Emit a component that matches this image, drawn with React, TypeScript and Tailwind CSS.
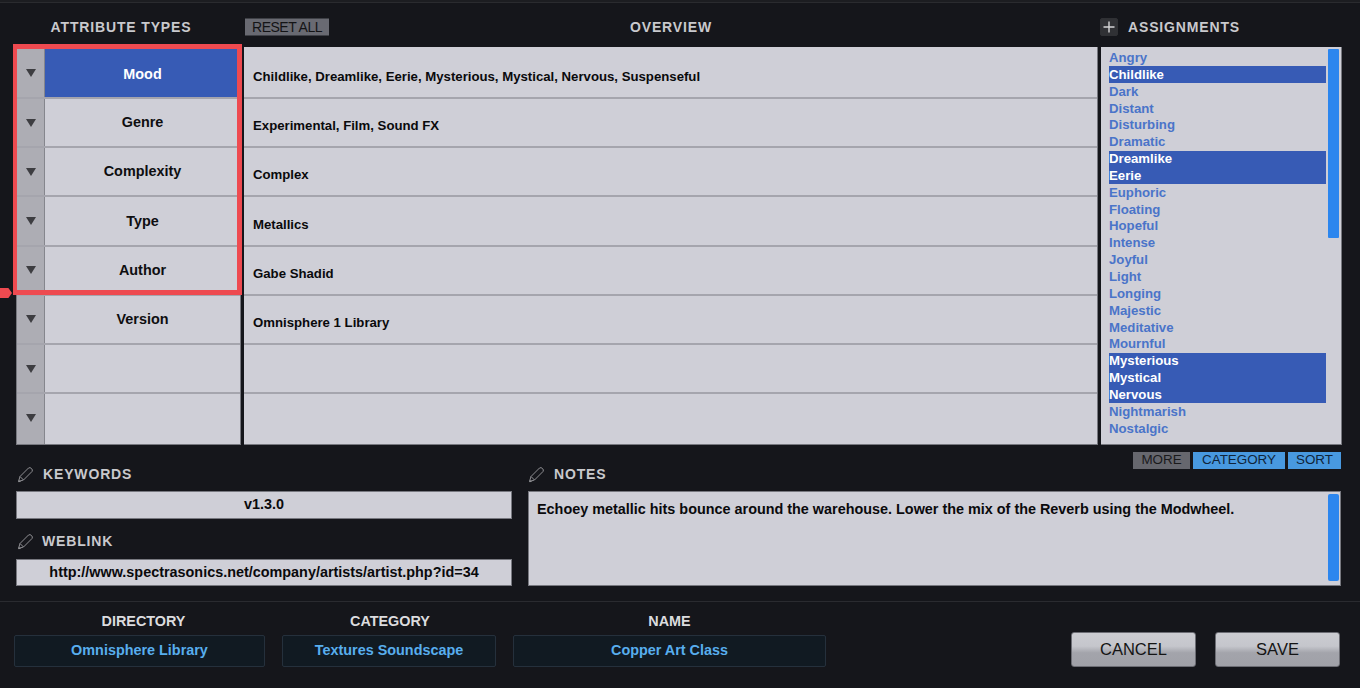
const rows = [
  { name: 'Mood', value: 'Childlike, Dreamlike, Eerie, Mysterious, Mystical, Nervous, Suspenseful', active: true },
  { name: 'Genre', value: 'Experimental, Film, Sound FX' },
  { name: 'Complexity', value: 'Complex' },
  { name: 'Type', value: 'Metallics' },
  { name: 'Author', value: 'Gabe Shadid' },
  { name: 'Version', value: 'Omnisphere 1 Library' },
  { name: '', value: '' },
  { name: '', value: '' },
];

const assignments = [
  ['Angry', false],
  ['Childlike', true],
  ['Dark', false],
  ['Distant', false],
  ['Disturbing', false],
  ['Dramatic', false],
  ['Dreamlike', true],
  ['Eerie', true],
  ['Euphoric', false],
  ['Floating', false],
  ['Hopeful', false],
  ['Intense', false],
  ['Joyful', false],
  ['Light', false],
  ['Longing', false],
  ['Majestic', false],
  ['Meditative', false],
  ['Mournful', false],
  ['Mysterious', true],
  ['Mystical', true],
  ['Nervous', true],
  ['Nightmarish', false],
  ['Nostalgic', false],
] as const;

const Pencil = () => (
  <svg width="17" height="17" viewBox="0 0 17 17" fill="none" stroke="#8f8f93" strokeWidth="1" className="shrink-0">
    <path d="M1.5 15.5 L3 10.5 L11.5 2 Q13 1 14.5 2.5 Q16 4 15 5.5 L6.5 14 Z" />
    <path d="M3 10.5 L6.5 14" />
    <path d="M1.5 15.5 L3.5 15" strokeWidth="1.6" />
  </svg>
);

const Label = ({ children }: { children: string }) => (
  <span className="text-[14px] font-bold tracking-[0.85px] leading-none text-[#c9c9cd]">{children}</span>
);

const Field = ({ label, value, className, labelClass = '' }: { label: string; value: string; className: string; labelClass?: string }) => (
  <div className={`flex flex-col items-center ${className}`}>
    <span className={`h-[21px] text-[14.4px] font-bold leading-[14px] text-[#dcdcdf] ${labelClass}`}>{label}</span>
    <div className="flex h-[32px] w-full items-center justify-center rounded-[2px] border border-[#25303c] bg-[#111a22] pb-[1px] text-[14.4px] font-bold text-[#58aeee]">
      {value}
    </div>
  </div>
);

const BigButton = ({ children }: { children: string }) => (
  <button className="flex h-[35px] w-[125px] items-center justify-center rounded-[3px] border border-[#6c6d74] bg-[linear-gradient(#cbccd1_0%,#c5c6cc_40%,#a3a4ab_60%,#a0a1a8_100%)] pb-[1px] text-[16.5px] text-[#141414]">
    {children}
  </button>
);

// rows are about 49px, first and last stretch to the panel edges
const rowHeight = (i: number) => {
  if (i === 0) return 'h-[52px] shrink-0';
  if (i === 7) return 'flex-1 min-h-0';
  return 'h-[49.2px] shrink-0';
};

export default function App() {
  return (
    <div className="relative flex h-[688px] w-[1360px] flex-col overflow-hidden bg-[#15161b] font-['Liberation_Sans',Arial,sans-serif]">
      <div className="h-[3px] bg-[#1c1d21] border-b border-[#2a2b2f]" />

      <div className="flex h-[44px] items-center pt-[3px] pl-[16px]">
        <div className="flex w-[228px] justify-center pr-[18px]">
          <Label>ATTRIBUTE TYPES</Label>
        </div>
        <div className="relative flex w-[856px] items-center justify-center pr-[2px]">
          <span className="absolute left-[1px] top-1/2 flex h-[17px] w-[84px] -translate-y-1/2 items-center justify-center bg-[#696a72] text-[14px] tracking-[-0.5px] text-[#141416]">
            RESET ALL
          </span>
          <Label>OVERVIEW</Label>
        </div>
        <div className="flex items-center gap-[10px]">
          <span className="flex h-[18px] w-[18px] items-center justify-center rounded-[2px] border border-[#2f3034] bg-[#303135] text-[#d4d4d6]">
            <svg width="12" height="12" viewBox="0 0 12 12" stroke="currentColor" strokeWidth="1.4">
              <path d="M6 0.5 V11.5 M0.5 6 H11.5" />
            </svg>
          </span>
          <Label>ASSIGNMENTS</Label>
        </div>
      </div>

      <div className="flex h-[398px] pl-[16px]">
        <div className="flex w-[225px] flex-col border-b border-r border-l border-[#77787f] bg-[#cfcfd7]">
          {rows.map((row, i) => (
            <div key={i} className={`flex border-b-2 border-[#a5a5ad] last:border-b-0 ${rowHeight(i)}`}>
              <div
                className={`flex w-[28px] shrink-0 items-center justify-center border-r border-[#85868d] bg-[#adadb4] ${
                  i === 0 ? 'pt-[2px]' : i === 7 ? 'pb-[3px]' : ''
                }`}
              >
                <span className="h-0 w-0 border-x-[5px] border-t-[8px] border-x-transparent border-t-[#3d3d41]" />
              </div>
              <div
                className={`flex flex-1 items-center justify-center text-[14.4px] font-bold ${
                  row.active ? 'bg-[#375bb5] pt-[5px] text-white' : 'pt-[1px] text-[#0e0e10]'
                }`}
              >
                {row.name}
              </div>
            </div>
          ))}
        </div>

        <div className="ml-[3px] flex w-[854px] flex-col border-b border-r border-[#77787f] bg-[#cfcfd7]">
          {rows.map((row, i) => (
            <div
              key={i}
              className={`flex items-center border-b-2 border-[#a5a5ad] pl-[9px] text-[13.2px] font-bold text-[#0a0a0c] last:border-b-0 ${rowHeight(i)} ${
                i === 0 ? 'pt-[9px]' : 'pt-[7px]'
              }`}
            >
              {row.value}
            </div>
          ))}
        </div>

        <div className="relative ml-[3px] w-[241px] border-b border-r border-[#77787f] bg-[#cfcfd7] pl-[8px] pt-[2.5px]">
          {assignments.map(([name, selected]) => (
            <div
              key={name}
              className={`flex h-[16.85px] w-[217px] items-center text-[13.2px] font-bold ${
                selected ? 'bg-[#375bb5] text-white' : 'text-[#4a74c9]'
              }`}
            >
              {name}
            </div>
          ))}
          <div className="absolute right-[2px] top-[2px] h-[189px] w-[11px] rounded-[1px] bg-[#2c86ee]" />
        </div>
      </div>

      <div className="flex h-[26px] items-center justify-end gap-[3px] pt-[4px] pr-[19px] text-[13.4px] leading-none">
        <span className="flex h-[17px] w-[57px] items-center justify-center bg-[#66676e] text-[#1a1a1c]">MORE</span>
        <span className="flex h-[17px] w-[92px] items-center justify-center bg-[#4899e0] text-[#10243a]">CATEGORY</span>
        <span className="flex h-[17px] w-[53px] items-center justify-center bg-[#4899e0] text-[#10243a]">SORT</span>
      </div>

      <div className="flex h-[131px] border-b border-[#2a2b30] pl-[16px]">
        <div className="flex w-[496px] flex-col">
          <div className="-mt-[7px] mb-[7px] flex h-[20px] items-center gap-[9px] pl-[1px]">
            <Pencil />
            <Label>KEYWORDS</Label>
          </div>
          <div className="flex h-[28px] items-center justify-center border border-[#77787f] bg-[#cfcfd7] text-[14.4px] font-bold text-[#0a0a0c]">
            v1.3.0
          </div>
          <div className="mt-[12px] flex h-[20px] items-center gap-[8px] pl-[1px]">
            <Pencil />
            <Label>WEBLINK</Label>
          </div>
          <div className="mt-[8px] flex h-[27px] items-center justify-center border border-[#77787f] bg-[#cfcfd7] text-[14.4px] font-bold text-[#0a0a0c]">
            http://www.spectrasonics.net/company/artists/artist.php?id=34
          </div>
        </div>
        <div className="ml-[16px] flex w-[813px] flex-col">
          <div className="-mt-[7px] mb-[7px] flex h-[20px] items-center gap-[9px]">
            <Pencil />
            <Label>NOTES</Label>
          </div>
          <div className="relative h-[95px] border border-[#77787f] bg-[#cfcfd7] pl-[8px] pt-[9px] text-[14.4px] font-bold leading-[16px] text-[#0a0a0c]">
            Echoey metallic hits bounce around the warehouse. Lower the mix of the Reverb using the Modwheel.
            <div className="absolute right-[1px] top-[2px] h-[87px] w-[11px] rounded-[2px] bg-[#2c86ee]" />
          </div>
        </div>
      </div>

      <div className="flex flex-1 pl-[14px] pr-[20px] pt-[12px]">
        <Field label="DIRECTORY" value="Omnisphere Library" className="w-[251px]" labelClass="pl-[8px]" />
        <Field label="CATEGORY" value="Textures Soundscape" className="ml-[17px] w-[214px]" labelClass="pl-[2px]" />
        <Field label="NAME" value="Copper Art Class" className="ml-[17px] w-[313px]" />
        <div className="ml-auto flex gap-[19px] pt-[18px]">
          <BigButton>CANCEL</BigButton>
          <BigButton>SAVE</BigButton>
        </div>
      </div>

      {/* highlight box lying over the attribute rows */}
      <div className="absolute left-[13px] top-[44px] h-[251px] w-[229px] border-[5px] border-l-4 border-[#ee4a50]" />
      <div className="absolute left-0 top-[288px] h-[10px] w-[12px] bg-[#ee4a50] [clip-path:polygon(0_0,70%_0,100%_50%,70%_100%,0_100%)]" />
    </div>
  );
}
